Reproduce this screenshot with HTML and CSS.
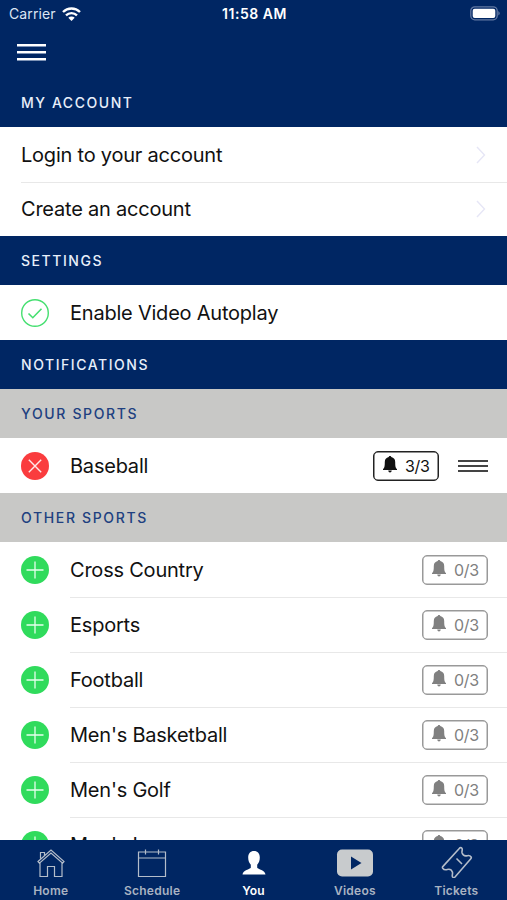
FILE: index.html
```html
<!DOCTYPE html>
<html lang="en">
  <head>
    <meta charset="UTF-8" />
    <meta name="viewport" content="width=device-width, initial-scale=1.0" />
    <title>You</title>
    <link rel="stylesheet" href="styles.css">
  </head>
  <body>
    <!-- shared icons -->
    <svg class="sprite" aria-hidden="true">
      <symbol id="plus" viewBox="0 0 28 28">
        <circle cx="14" cy="14" r="14" fill="#30db5c" />
        <path d="M14 5.5v17M5.5 14h17" stroke="#e5ffeb" stroke-width="1.3" />
      </symbol>
      <symbol id="bell" viewBox="0 0 14 17">
        <path d="M7 0c.8 0 1.200.5 1.300 1.100 2.500.6 3.900 2.400 3.900 4.800 0 4.200.3 5.900 1.800 7.200v.9H0v-.9c1.500-1.300 1.800-3 1.800-7.200 0-2.400 1.400-4.200 3.900-4.800C5.800.5 6.200 0 7 0zM5.200 14.600h3.600c-.2 1.200-.9 1.900-1.800 1.900s-1.600-.7-1.800-1.900z" fill="currentColor" />
      </symbol>
      <symbol id="chevron" viewBox="0 0 10 18">
        <path d="M1 1l7.500 8L1 17" fill="none" stroke="#e6e6f6" stroke-width="1.400" />
      </symbol>
    </svg>

    <div class="app">
      <header class="header">
        <div class="status">
          <div class="carrier">
            <span>Carrier</span>
            <svg width="19" height="14" viewBox="0 0 19 14">
              <path d="M1 5a12.200 12.200 0 0 1 17 0M4 8.300a8 8 0 0 1 11 0" fill="none" stroke="#fff" stroke-width="2.400" />
              <path d="M9.500 14l-3.200-3.300a4.600 4.600 0 0 1 6.400 0z" fill="#fff" />
            </svg>
          </div>
          <div class="time">11:58 AM</div>
          <svg class="battery" width="31" height="15" viewBox="0 0 31 15">
            <rect x="1.800" y=".8" width="26.400" height="13" rx="4" fill="none" stroke="#6279a3" stroke-width="1.300" />
            <rect x="3.700" y="2.700" width="22.600" height="9.200" rx="2" fill="#fff" />
            <path d="M29.300 5v4.600q3-2.300 0-4.600z" fill="#6279a3" />
          </svg>
        </div>
        <div class="menu"><i></i><i></i><i></i></div>
      </header>

      <main class="content">
        <h2 class="section">MY ACCOUNT</h2>
        <div class="row link">
          <span>Login to your account</span>
          <svg class="chevron"><use href="#chevron" /></svg>
        </div>
        <div class="row link">
          <span>Create an account</span>
          <svg class="chevron"><use href="#chevron" /></svg>
        </div>

        <h2 class="section">SETTINGS</h2>
        <div class="row">
          <svg class="toggle" viewBox="0 0 28 28">
            <circle cx="14" cy="14" r="13.300" fill="none" stroke="#45df70" stroke-width="1.400" />
            <path d="M7.500 14.500l4.300 4.200 8.700-9" fill="none" stroke="#45df70" stroke-width="1.600" />
          </svg>
          <span class="name">Enable Video Autoplay</span>
        </div>

        <h2 class="section">NOTIFICATIONS</h2>
        <h3 class="section sub">YOUR SPORTS</h3>
        <div class="row sport">
          <svg class="toggle" viewBox="0 0 28 28">
            <circle cx="14" cy="14" r="14" fill="#fa3c3e" />
            <path d="M7.800 7.800l12.400 12.400M20.200 7.800L7.800 20.200" stroke="#ffe9e9" stroke-width="1.400" />
          </svg>
          <span class="name">Baseball</span>
          <span class="badge on"><svg><use href="#bell" /></svg>3/3</span>
          <span class="drag"><i></i><i></i><i></i></span>
        </div>

        <h3 class="section sub">OTHER SPORTS</h3>
        <div class="row sport">
          <svg class="toggle"><use href="#plus" /></svg>
          <span class="name">Cross Country</span>
          <span class="badge"><svg><use href="#bell" /></svg>0/3</span>
        </div>
        <div class="row sport">
          <svg class="toggle"><use href="#plus" /></svg>
          <span class="name">Esports</span>
          <span class="badge"><svg><use href="#bell" /></svg>0/3</span>
        </div>
        <div class="row sport">
          <svg class="toggle"><use href="#plus" /></svg>
          <span class="name">Football</span>
          <span class="badge"><svg><use href="#bell" /></svg>0/3</span>
        </div>
        <div class="row sport">
          <svg class="toggle"><use href="#plus" /></svg>
          <span class="name">Men's Basketball</span>
          <span class="badge"><svg><use href="#bell" /></svg>0/3</span>
        </div>
        <div class="row sport">
          <svg class="toggle"><use href="#plus" /></svg>
          <span class="name">Men's Golf</span>
          <span class="badge"><svg><use href="#bell" /></svg>0/3</span>
        </div>
        <div class="row sport">
          <svg class="toggle"><use href="#plus" /></svg>
          <span class="name">Men's Lacrosse</span>
          <span class="badge"><svg><use href="#bell" /></svg>0/3</span>
        </div>
      </main>

      <nav class="tabs">
        <div class="tab">
          <svg width="40" height="34" viewBox="0 0 40 34">
            <path d="M7 17.500L20 6l13 11.500-1.400 1.600L20 9 8.400 19.100zM9.500 14.500V8.500h4v3M9 19v13.500h7.500V22.500h7v10H31V19" />
          </svg>
          <span>Home</span>
        </div>
        <div class="tab">
          <svg width="40" height="34" viewBox="0 0 40 34">
            <path d="M6.500 8h27v24.500h-27zM6.500 14h27M13.500 5.500v5M26.500 5.500v5" />
          </svg>
          <span>Schedule</span>
        </div>
        <div class="tab active">
          <svg width="40" height="34" viewBox="0 0 40 34">
            <path class="solid" d="M20 7c3.700 0 5.800 2.600 5.800 6.500 0 3.300-1 5.500-2.600 7.200v3.100c.8 1.700 7.800 2 8.300 6.700h-23c.5-4.700 7.500-5 8.300-6.700v-3.100c-1.600-1.700-2.600-3.900-2.600-7.200C14.200 9.600 16.300 7 20 7z" />
          </svg>
          <span>You</span>
        </div>
        <div class="tab">
          <svg width="40" height="34" viewBox="0 0 40 34">
            <rect class="solid" x="2" y="5.500" width="36" height="27" rx="5" />
            <path class="play" d="M16 12.500v13l10.500-6.500z" />
          </svg>
          <span>Videos</span>
        </div>
        <div class="tab">
          <svg width="40" height="34" viewBox="0 0 40 34">
            <path class="ticket" d="M23.500 4.200q1.300-1.200 2.400.1c1 1.300-.4 2.800.2 4.800.8 2.200 3 3.200 5.200 2.600 1.800-.5 3 .1 3.800 1.300q.5.900-.3 1.700L19 33q-1.300 1.200-2.400-.1c-1-1.300.4-2.800-.2-4.800-.8-2.200-3-3.200-5.200-2.600-1.800.5-3.300.3-4.500-1.300q-.6-.9.300-1.800zM20.500 14.500l5.500 5.500" />
          </svg>
          <span>Tickets</span>
        </div>
      </nav>
    </div>
  </body>
</html>
```

FILE: styles.css
```css
* {
  box-sizing: border-box;
}
body {
  margin: 0;
  font-family: Inter, "Liberation Sans", sans-serif;
  color: #111;
  background: #fff;
}
.sprite {
  display: none;
}
.app {
  display: flex;
  flex-direction: column;
  height: 900px;
  overflow: hidden;
}
svg {
  display: block;
  flex: none;
}

/* Status bar and menu button */
.header {
  flex: none;
  height: 78px;
  background: #002663;
  color: #fff;
}
.status {
  display: grid;
  grid-template-columns: 1fr auto 1fr;
  align-items: center;
  height: 27px;
  padding: 0 7px 0 9px;
  font-size: 14px;
}
.carrier {
  display: flex;
  align-items: center;
  gap: 6px;
  color: #dce5f3;
  letter-spacing: 0.1px;
}
.time {
  font-weight: 600;
  letter-spacing: 0.55px;
}
.battery {
  justify-self: end;
}
.menu {
  display: flex;
  flex-direction: column;
  gap: 5px;
  width: 29px;
  margin: 17px 0 0 17px;
}
.menu i {
  height: 2px;
  background: #fff;
  box-shadow: 0 1px #7d92b5;
}

/* Section headings */
.content {
  flex: 1;
  min-height: 0;
  overflow: hidden;
}
.section {
  display: flex;
  align-items: center;
  height: 49px;
  margin: 0;
  padding-left: 21px;
  background: #002663;
  color: #e8effa;
  font-size: 14px;
  font-weight: 500;
  letter-spacing: 1.55px;
}
.section.sub {
  background: #c8c8c6;
  color: #204080;
  letter-spacing: 1.65px;
}

/* Rows */
.row {
  display: flex;
  align-items: center;
  height: 54.5px;
  padding: 1px 19px 0 21px;
  font-size: 20px;
  letter-spacing: -0.22px;
}
.row.sport {
  height: 55px;
}
.link {
  justify-content: space-between;
}
.link + .link {
  padding-top: 0;
}
.link + .link,
.sport + .sport {
  background: linear-gradient(#e8e8e8, #e8e8e8) 21px 0 / 100% 1px no-repeat;
}
.sport + .sport {
  background-position-x: 70px;
}
.chevron {
  width: 10px;
  height: 18px;
  margin-right: 2px;
}
.toggle {
  width: 28px;
  height: 28px;
}
.name {
  flex: 1;
  margin-left: 21px;
}
.badge {
  display: flex;
  align-items: center;
  gap: 8px;
  width: 66px;
  height: 30px;
  padding-left: 9px;
  border: 1px solid #999;
  border-radius: 5px;
  box-shadow: inset 0 0 0 0.5px #999;
  color: #808080;
  font-size: 16px;
  letter-spacing: -0.3px;
}
.badge svg {
  width: 14px;
  height: 17px;
  margin-top: -2px;
}
.badge.on {
  border-color: #222;
  box-shadow: inset 0 0 0 0.5px #222;
  color: #111;
}
.drag {
  display: flex;
  flex-direction: column;
  gap: 3px;
  width: 30px;
  margin-left: 19px;
}
.drag i {
  height: 2px;
  background: #444;
}

/* Bottom tab bar */
.tabs {
  flex: none;
  display: flex;
  height: 60px;
  background: #002663;
}
.tab {
  display: flex;
  flex: 1;
  flex-direction: column;
  align-items: center;
  padding-top: 4px;
  color: #a9b3c2;
  font-size: 12px;
  font-weight: 600;
  letter-spacing: 0.25px;
}
.tab svg {
  fill: none;
  stroke: #b4bdca;
  stroke-width: 1.2;
}
.tab .ticket {
  stroke-width: 1.6;
}
.tab .solid {
  fill: #c8cbcd;
  stroke: none;
}
.tab .play {
  fill: #002663;
  stroke: none;
}
.tab.active {
  color: #fff;
}
.tab.active .solid {
  fill: #fff;
}
.tab span {
  margin-top: 5px;
}
```
